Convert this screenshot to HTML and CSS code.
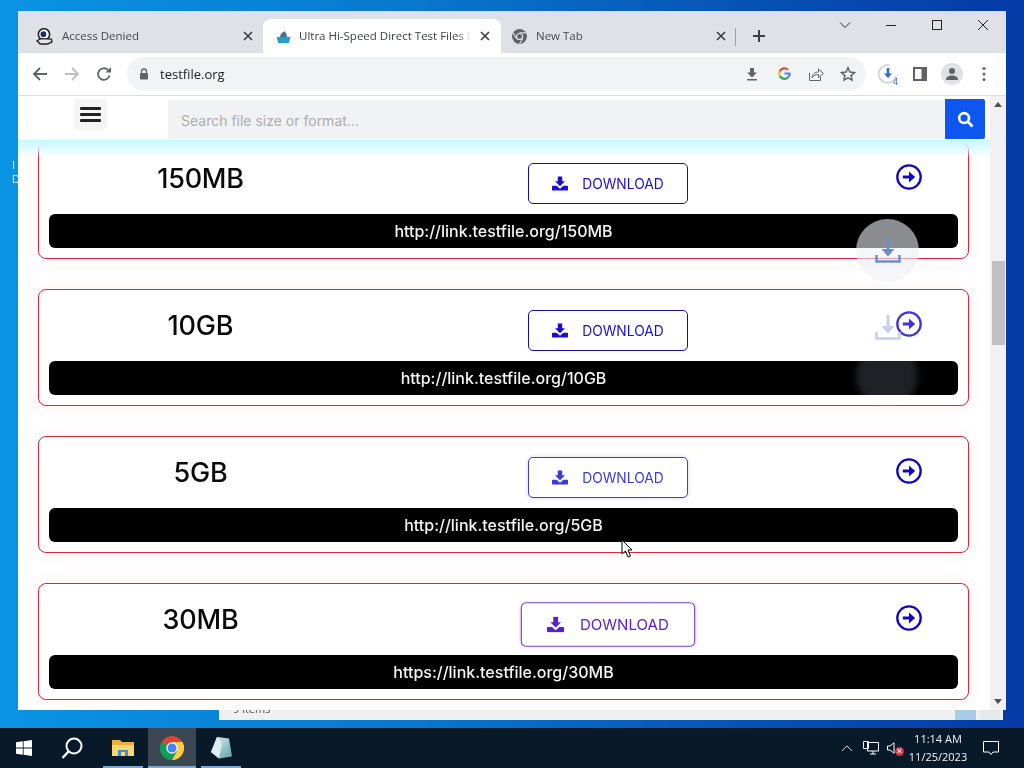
FILE: index.html
```html
<!DOCTYPE html>
<html lang="en">
<head>
<meta charset="utf-8">
<title>Ultra Hi-Speed Direct Test Files</title>
<link rel="stylesheet" href="styles.css">
</head>
<body>
<svg class="defs" width="0" height="0" aria-hidden="true">
  <symbol id="dl" viewBox="0 0 18 16"><path d="M6.500 0h5v5.600h3.100L9 11 3.400 5.600h3.100z"/><path d="M1 10.500h4.200L9 14l3.800-3.500H17c.6 0 1 .4 1 1V15c0 .6-.4 1-1 1H1c-.6 0-1-.4-1-1v-3.500c0-.6.4-1 1-1z"/></symbol>
  <symbol id="arrow" viewBox="0 0 26 26"><circle cx="13" cy="13" r="11.700" fill="none" stroke="currentColor" stroke-width="2.300"/><path d="M6.800 11.400h6.200V7.500l6.200 5.500-6.200 5.500v-3.900h-6.200z" fill="currentColor"/></symbol>
  <symbol id="fab" viewBox="0 0 26 25"><path d="M13 0v17" fill="none" stroke="currentColor" stroke-width="3"/><path d="M6.500 11h13L13 18.500z" fill="currentColor"/><path d="M1.500 17v6.500h23V17" fill="none" stroke="currentColor" stroke-width="2.500"/></symbol>
  <symbol id="close" viewBox="0 0 10 10"><path d="M1 1l8 8M9 1 1 9" fill="none" stroke="#3c4043" stroke-width="1.700"/></symbol>
</svg>
<div class="desktop">
  <div class="icon-label">I<br>D</div>
  <div class="back-window"><span>9 items</span><i class="view-a"></i><i class="view-b"></i></div>
  <div class="window">
    <div class="tabstrip">
      <div class="tab">
        <svg class="favicon" viewBox="0 0 16 16"><circle cx="7.500" cy="6" r="5.300" fill="#fff" stroke="#222" stroke-width="1.500"/><circle cx="7" cy="5.800" r="2.700" fill="#1d2a6b"/><path d="M1 12l3.500-2 10 .5.500 2.500-4 2H4z" fill="#e8e8e8" stroke="#222" stroke-width="1.300"/></svg>
        <span class="tab-title">Access Denied</span><svg class="tab-x"><use href="#close"/></svg>
      </div>
      <div class="tab active">
        <svg class="favicon" viewBox="0 0 16 16"><path d="M1.500 8.500h13l-1.500 5.500H3z" fill="#1f9fd0"/><path d="M4.500 8.500 6 5l3-2 1.500 2 1 3.500z" fill="#4a6f90"/></svg>
        <span class="tab-title fade">Ultra Hi-Speed Direct Test Files D</span><svg class="tab-x"><use href="#close"/></svg>
      </div>
      <div class="tab">
        <svg class="favicon" viewBox="0 0 16 16"><circle cx="8" cy="8" r="7" fill="#5f6368"/><circle cx="8" cy="8" r="3.400" fill="#dee1e6"/><circle cx="8" cy="8" r="2.300" fill="#5f6368"/><path d="M8 4.600h6M5 9.800 2 4.500M11 9.800 8 15" stroke="#dee1e6" stroke-width="1"/></svg>
        <span class="tab-title">New Tab</span><svg class="tab-x"><use href="#close"/></svg>
      </div>
      <i class="tab-divider"></i>
      <svg class="newtab" viewBox="0 0 14 14"><path d="M7 1v12M1 7h12" stroke="#3c4043" stroke-width="2"/></svg>
      <div class="winctl">
        <svg class="ctl-chev" viewBox="0 0 12 8"><path d="M1 1.500l5 5 5-5" fill="none" stroke="#333" stroke-width="1"/></svg>
        <svg class="ctl" viewBox="0 0 46 12"><path d="M18 6.500h10" stroke="#222" stroke-width="1"/></svg>
        <svg class="ctl" viewBox="0 0 46 12"><rect x="18.500" y="1.500" width="9" height="9" fill="none" stroke="#222" stroke-width="1"/></svg>
        <svg class="ctl" viewBox="0 0 46 12"><path d="M18 1l10 10M28 1 18 11" stroke="#222" stroke-width="1"/></svg>
      </div>
    </div>
    <div class="toolbar">
      <span class="tbtn"><svg viewBox="0 0 16 16" class="ico16"><path d="M15 8H2.500M8 2 2 8l6 6" fill="none" stroke="#5f6368" stroke-width="1.800"/></svg></span>
      <span class="tbtn"><svg viewBox="0 0 16 16" class="ico16"><path d="M1 8h12.500M8 2l6 6-6 6" fill="none" stroke="#bcbec2" stroke-width="1.800"/></svg></span>
      <span class="tbtn"><svg viewBox="0 0 16 16" class="ico16"><path d="M13.500 9.500A5.800 5.800 0 1 1 12 4" fill="none" stroke="#5f6368" stroke-width="1.800"/><path d="M9.500 6.500h5.500V1z" fill="#5f6368"/></svg></span>
      <div class="omnibox">
        <svg class="lock" viewBox="0 0 10 12"><path d="M2.500 5V3.500a2.500 2.500 0 0 1 5 0V5" fill="none" stroke="#5f6368" stroke-width="1.300"/><rect x="1" y="5" width="8" height="6.500" rx="1" fill="#5f6368"/></svg>
        <span class="url">testfile.org</span>
        <span class="obtn"><svg viewBox="0 0 14 14" class="ico14"><path d="M5 1h4v4.500h3L7 10.500 2 5.500h3zM2 12h10v1.500H2z" fill="#5f6368"/></svg></span>
        <span class="obtn"><svg viewBox="0 0 16 16" class="ico-g"><path d="M14 8H8M13.600 7.800A5.600 5.600 0 0 1 11.500 12.400" fill="none" stroke="#4285f4" stroke-width="2.300"/><path d="M11.500 12.400A5.600 5.600 0 0 1 2.900 10.400" fill="none" stroke="#34a853" stroke-width="2.300"/><path d="M2.900 10.400A5.600 5.600 0 0 1 2.900 5.600" fill="none" stroke="#fbbc05" stroke-width="2.300"/><path d="M2.900 5.600A5.600 5.600 0 0 1 11.900 4" fill="none" stroke="#ea4335" stroke-width="2.300"/></svg></span>
        <span class="obtn"><svg viewBox="0 0 16 16" class="ico16"><path d="M1.500 7v7.500h11V11" fill="none" stroke="#5f6368" stroke-width="1"/><path d="M4 12c.5-4 3-6 6.500-6V3l5 4.500-5 4V8.500C8 8.500 5.500 9.500 4 12z" fill="none" stroke="#5f6368" stroke-width="1"/></svg></span>
        <span class="obtn"><svg viewBox="0 0 16 16" class="ico16"><path d="M8 1.800l1.900 4.200 4.600.5-3.400 3.100.9 4.500-4-2.300-4 2.300.9-4.500-3.400-3.100 4.600-.5z" fill="none" stroke="#5f6368" stroke-width="1.500"/></svg></span>
      </div>
      <span class="tbtn ext"><svg viewBox="0 0 20 20" class="ico20"><path d="M12 1.500A8.800 8.800 0 1 0 18 12" fill="none" stroke="#cfd4da" stroke-width="1.800"/><path d="M8.700 4h2.600v5.500h2.700L10 14 6 9.500h2.700z" fill="#2f6fb8"/></svg><b class="ext-num">4</b></span>
      <span class="tbtn"><svg viewBox="0 0 14 14" class="ico14"><path d="M0 0h14v14H0z" fill="#5f6368"/><path d="M2 2h6.500v10H2z" fill="#fff"/></svg></span>
      <span class="tbtn"><span class="avatar"><svg viewBox="0 0 14 14" class="ico14"><circle cx="7" cy="4" r="3" fill="#5f6368"/><path d="M1 13c0-3 2.500-4.500 6-4.500s6 1.500 6 4.500z" fill="#5f6368"/></svg></span></span>
      <span class="tbtn"><svg viewBox="0 0 4 16" class="ico-menu"><circle cx="2" cy="2.500" r="1.500" fill="#5f6368"/><circle cx="2" cy="8" r="1.500" fill="#5f6368"/><circle cx="2" cy="13.500" r="1.500" fill="#5f6368"/></svg></span>
    </div>
    <div class="viewport">
      <div class="page">
        <header class="site-header">
          <div class="burger"><i></i><i></i><i></i></div>
          <div class="search">
            <div class="search-input">Search file size or format...</div>
            <div class="search-btn"><svg viewBox="0 0 18 18" class="ico-search"><circle cx="7.500" cy="7.500" r="5.200" fill="none" stroke="#fff" stroke-width="2.800"/><path d="M11.500 11.500l5 5" stroke="#fff" stroke-width="3"/></svg></div>
          </div>
        </header>
        <main class="cards">
          <section class="card">
            <div class="row"><div class="size">150MB</div><div class="btn-cell"><a class="dl-btn"><svg class="dl-ico"><use href="#dl"/></svg>DOWNLOAD</a></div><svg class="go"><use href="#arrow"/></svg></div>
            <div class="link">http://link.testfile.org/150MB</div>
          </section>
          <section class="card">
            <div class="row"><div class="size">10GB</div><div class="btn-cell"><a class="dl-btn"><svg class="dl-ico"><use href="#dl"/></svg>DOWNLOAD</a></div><svg class="go tint"><use href="#arrow"/></svg></div>
            <div class="link">http://link.testfile.org/10GB</div>
          </section>
          <section class="card">
            <div class="row"><div class="size">5GB</div><div class="btn-cell"><a class="dl-btn soft"><svg class="dl-ico"><use href="#dl"/></svg>DOWNLOAD</a></div><svg class="go"><use href="#arrow"/></svg></div>
            <div class="link">http://link.testfile.org/5GB</div>
          </section>
          <section class="card">
            <div class="row"><div class="size">30MB</div><div class="btn-cell"><a class="dl-btn hover"><svg class="dl-ico"><use href="#dl"/></svg>DOWNLOAD</a></div><svg class="go"><use href="#arrow"/></svg></div>
            <div class="link">https://link.testfile.org/30MB</div>
          </section>
        </main>
      </div>
      <div class="fab fab-main"><svg class="fab-ico"><use href="#fab"/></svg></div>
      <svg class="fab-ghost"><use href="#fab"/></svg>
      <div class="fab-dark"></div>
      <div class="scrollbar">
        <svg class="sb-arrow" viewBox="0 0 8 5"><path d="M0 5l4-5 4 5z" fill="#505050"/></svg>
        <div class="sb-track"><div class="sb-thumb"></div></div>
        <svg class="sb-arrow" viewBox="0 0 8 5"><path d="M0 0l4 5 4-5z" fill="#505050"/></svg>
      </div>
    </div>
  </div>
  <svg class="cursor" viewBox="0 0 12 19"><path d="M1 1v14l3.500-3 2.500 6 2.500-1-2.500-6H11z" fill="#fff" stroke="#000" stroke-width="1"/></svg>
  <footer class="taskbar">
    <div class="task start"><svg viewBox="0 0 16 16" class="ico16"><path d="M0 2.300 6.800 1.300v6.300H0zM7.600 1.200 16 0v7.600H7.600zM0 8.400h6.800v6.300L0 13.700zM7.600 8.400H16V16l-8.400-1.200z" fill="#fff"/></svg></div>
    <div class="task search-t"><svg viewBox="0 0 22 22" class="ico22"><circle cx="13" cy="9" r="7.500" fill="none" stroke="#fff" stroke-width="2"/><path d="M7.500 14.500 1.500 21" stroke="#fff" stroke-width="2.400"/></svg></div>
    <div class="task app"><svg viewBox="0 0 22 18" class="ico-folder"><path d="M0 1h8l2 2h12v14H0z" fill="#e8b13d"/><path d="M0 6h22v11H0z" fill="#f7d774"/><path d="M6 11h10v6H6z" fill="#3f8ed0"/><path d="M9 13h4v4H9z" fill="#f7d774"/></svg></div>
    <div class="task app on"><svg viewBox="0 0 24 24" class="ico-chrome"><circle cx="12" cy="12" r="12" fill="#db4437"/><path d="M12 12 1.600 6A12 12 0 0 0 12 24l6-10.400z" fill="#0f9d58"/><path d="M12 6h10.400A12 12 0 0 1 12 24l5.200-9z" fill="#ffcd40"/><circle cx="12" cy="12" r="5.700" fill="#fff"/><circle cx="12" cy="12" r="4.500" fill="#4285f4"/></svg></div>
    <div class="task app"><svg viewBox="0 0 22 24" class="ico-note"><defs><linearGradient id="nt" x1="0" y1="0" x2="1" y2="1"><stop offset="0" stop-color="#e6f6f6"/><stop offset="1" stop-color="#5f9ea2"/></linearGradient></defs><path d="M7 1 19 2.500l3 18-13 2L1 16z" fill="url(#nt)"/><path d="M7 1 1 16l8 6.500L12 7z" fill="#d6eff0"/></svg></div>
    <div class="tray">
      <svg viewBox="0 0 14 8" class="tray-up"><path d="M1 7l6-6 6 6" fill="none" stroke="#fff" stroke-width="1"/></svg>
      <svg viewBox="0 0 16 14" class="tray-net"><path d="M4.500 1.500H15.500V10H4.500zM.5.500h5v7h-5zM7 13h6M10 10v3" fill="#08192a" stroke="#fff" stroke-width="1"/></svg>
      <span class="tray-vol"><svg viewBox="0 0 10 12" class="vol-ico"><path d="M.5 4h2.500L7 .8v10.400L3 8H.5z" fill="none" stroke="#fff" stroke-width="1"/></svg><b class="vol-x">×</b></span>
      <div class="clock"><span>11:14 AM</span><span>11/25/2023</span></div>
      <svg viewBox="0 0 16 16" class="tray-note"><path d="M.5 1.500h15v10.500H10L8 14.500 6 12H.5z" fill="none" stroke="#fff" stroke-width="1"/></svg>
    </div>
  </footer>
</div>
</body>
</html>
```
FILE: styles.css
```css
* { box-sizing: border-box; }
html, body { margin: 0; height: 100%; overflow: hidden; }
body { font-family: "Open Sans", "Liberation Sans", sans-serif; }
svg { display: block; }
.defs { position: absolute; }

.desktop {
  position: relative; width: 1024px; height: 768px; overflow: hidden;
  display: flex; flex-direction: column; justify-content: flex-end;
  background: linear-gradient(90deg, #0a94e4 0%, #0878cf 40%, #0650b4 75%, #053aa6 100%);
}
.icon-label { position: absolute; left: 12px; top: 158px; width: 6px; overflow: hidden; color: #e8f2fa; font: 11px/14px "Liberation Sans", sans-serif; }
.back-window {
  position: absolute; left: 219px; top: 698px; width: 784px; height: 22px;
  background: #f0f0f0; color: #555; font: 11px/18px "Open Sans", sans-serif;
  padding: 2px 0 0 14px;
}
.back-window span { display: block; }
.view-a { position: absolute; right: 27px; top: 12px; width: 21px; height: 10px; background: #a9cbe6; }
.view-b { position: absolute; right: 3px; top: 12px; width: 20px; height: 10px; background: #e6e8ea; }

.window {
  position: absolute; left: 18px; top: 11px; width: 988px; height: 699px;
  display: flex; flex-direction: column; background: #fff;
}
.tabstrip { height: 42px; background: #dee1e6; display: flex; align-items: flex-end; flex: none; position: relative; }
.tab { height: 34px; display: flex; align-items: center; color: #45494e; font-size: 11.5px; position: relative; }
.tab:nth-child(1) { width: 245px; padding-left: 18px; }
.tab:nth-child(2) { width: 238px; padding-left: 12px; }
.tab:nth-child(3) { width: 235px; padding-left: 9px; }
.tab.active { background: #fff; border-radius: 8px 8px 0 0; color: #3c4043; }
.favicon { width: 17px; height: 17px; flex: none; margin-right: 9px; }
.active .favicon { margin-right: 7px; }
.tab:nth-child(3) .favicon { margin-left: 1px; margin-right: 8px; }
.tab-title { flex: 1; min-width: 0; white-space: nowrap; overflow: hidden; margin-top: -1px; padding-bottom: 1px; }
.tab-title.fade { -webkit-mask-image: linear-gradient(90deg, #000 92%, transparent 100%); mask-image: linear-gradient(90deg, #000 92%, transparent 100%); }
.tab-x { width: 10px; height: 10px; flex: none; margin: 0 10px; }
.active .tab-x { margin-right: 11px; margin-left: 9px; }
.tab-divider { width: 1px; height: 18px; background: #9aa0a6; align-self: flex-end; margin-bottom: 7px; margin-left: -1px; }
.newtab { width: 14px; height: 14px; margin: 0 0 10px 16px; }
.winctl { position: absolute; right: 0; top: 0; height: 28px; display: flex; align-items: center; }
.ctl-chev { width: 12px; height: 8px; margin-right: 17px; }
.ctl { width: 46px; height: 12px; }

.toolbar { height: 43px; flex: none; display: flex; align-items: center; padding: 0 6px 1px; background: #fff; border-bottom: 1px solid #dadce0; }
.tbtn { width: 32px; height: 32px; flex: none; display: flex; align-items: center; justify-content: center; position: relative; }
.ico14 { width: 14px; height: 14px; }
.ico16 { width: 16px; height: 16px; }
.ico20 { width: 20px; height: 20px; }
.ico22 { width: 22px; height: 22px; }
.ico-g { width: 15px; height: 15px; }
.ico-search { width: 17px; height: 17px; }
.ico-menu { width: 4px; height: 16px; }
.omnibox { flex: 1; height: 34px; margin: 0 6px 0 7px; border-radius: 17px; background: #f1f3f4; display: flex; align-items: center; padding: 0 2px 0 12px; }
.lock { width: 10px; height: 12px; flex: none; margin-right: 11px; }
.url { flex: 1; font-size: 13px; color: #202124; }
.obtn { width: 32px; height: 32px; display: flex; align-items: center; justify-content: center; flex: none; }
.ext-num { position: absolute; left: 21px; top: 18px; font-size: 9px; font-weight: 400; color: #2f6fb8; line-height: 11px; }
.avatar { width: 22px; height: 22px; border-radius: 50%; background: #dfe1e5; display: flex; align-items: center; justify-content: center; }

.viewport { flex: 1; position: relative; overflow: hidden; display: flex; min-height: 0; }
.page { flex: 1; min-width: 0; position: relative; font-family: Inter, "Liberation Sans", sans-serif; }
.site-header { height: 47px; background: #fff; position: relative; z-index: 2; padding: 3px 5px 0 56px; display: flex; align-items: flex-start; }
.site-header::after { content: ""; position: absolute; left: 0; right: 0; top: 44px; height: 18px; background: linear-gradient(#c6f8ff 0%, rgba(214,250,255,.8) 45%, rgba(255,255,255,0) 100%); pointer-events: none; }
.burger { width: 33px; height: 31px; background: #f5f5f5; border-radius: 3px; display: flex; flex-direction: column; justify-content: center; gap: 3px; padding: 0 6px; flex: none; }
.burger i { display: block; height: 3px; border-radius: 1px; background: #222; }
.search { flex: 1; margin-left: 61px; display: flex; height: 40px; position: relative; z-index: 3; }
.search-input { flex: 1; margin-top: 1px; background: #f1f2f3; height: 39px; border-radius: 3px 0 0 3px; padding: 1px 0 0 13px; color: #adadad; font-size: 14px; line-height: 39px; }
.search-btn { width: 40px; background: #0d56f0; border-radius: 0 2px 2px 0; display: flex; align-items: center; justify-content: center; }

.cards { padding: 0 0 0 20px; margin-top: -1px; display: flex; flex-direction: column; gap: 30px; }
.card { width: 931px; height: 117px; border: 1px solid #d8263a; border-radius: 8px; padding: 20px 10px 10px; background: #fff; box-shadow: 0 0 14px rgba(255, 80, 60, .10); flex: none; }
.row { display: grid; grid-template-columns: 303px 512px 90px; height: 41px; margin-bottom: 10px; padding-right: 4px; color: #0b00c4; }
.size { color: #0a0a0a; text-align: center; font-size: 27px; line-height: 32px; font-weight: 500; letter-spacing: -.2px; }
.btn-cell { display: flex; justify-content: center; }
.dl-btn { width: 160px; height: 41px; border: 1px solid #150ea0; border-radius: 5px; display: flex; align-items: center; justify-content: center; gap: 14px; color: #1a0fd0; font-size: 13.8px; background: #fff; }
.dl-btn.soft { color: #3a3ad8; border-color: #4040c0; box-shadow: 0 0 4px rgba(70, 70, 220, .25); }
.dl-btn.hover { transform: scale(1.09); color: #5a20d0; border-color: #7a45cc; box-shadow: 0 0 3px rgba(120, 60, 220, .2); }
.dl-ico { width: 16px; height: 15px; fill: currentColor; flex: none; }
.go { width: 26px; height: 26px; margin: 1px 0 0 32px; color: #1207c0; }
.go.tint { color: #3f33e0; }
.link { height: 34px; border-radius: 6px; background: #000; color: #f4f4f4; text-align: center; font-size: 16px; line-height: 35px; font-weight: 500; }

.fab { position: absolute; border-radius: 50%; z-index: 1; }
.fab-main { left: 838px; top: 123px; width: 63px; height: 63px; background: rgba(237, 240, 245, .59); display: flex; align-items: center; justify-content: center; }
.fab-ico { width: 26px; height: 25px; color: #6a8fc8; }
.fab-ghost { position: absolute; left: 857px; top: 219px; width: 26px; height: 25px; color: #c6cfe6; z-index: 1; }
.fab-dark { position: absolute; left: 838px; top: 249px; width: 62px; height: 62px; border-radius: 50%; background: #1f2126; mix-blend-mode: screen; filter: blur(3px); z-index: 1; }

.scrollbar { width: 16px; flex: none; background: #f1f1f1; display: flex; flex-direction: column; align-items: center; padding: 6px 0; position: relative; z-index: 3; }
.sb-arrow { width: 8px; height: 5px; flex: none; }
.sb-track { flex: 1; width: 100%; padding-top: 154px; }
.sb-thumb { width: 13px; height: 84px; margin: 0 auto; background: #c1c1c1; }

.cursor { position: absolute; left: 621px; top: 539px; width: 12px; height: 19px; z-index: 9; }

.taskbar { height: 40px; flex: none; background: #08192a; display: flex; align-items: center; position: relative; z-index: 4; }
.task { height: 40px; display: flex; align-items: center; justify-content: center; flex: none; position: relative; }
.start { width: 48px; }
.search-t { width: 48px; }
.app { width: 48px; margin-left: 2px; }
.search-t + .app { margin-left: 7px; width: 40px; }
.app::after { content: ""; position: absolute; left: 0; right: 0; bottom: 0; height: 2px; background: #7fa8d0; }
.app.on { background: #3a4652; width: 48px; margin-left: 5px; }
.app.on + .app { width: 40px; margin-left: 5px; }
.ico-folder { width: 22px; height: 18px; }
.ico-chrome { width: 24px; height: 24px; }
.ico-note { width: 22px; height: 24px; }
.tray { margin-left: auto; display: flex; align-items: center; color: #fff; height: 40px; padding-right: 25px; }
.tray-up { width: 12px; height: 7px; margin-right: 10px; }
.tray-net { width: 16px; height: 14px; margin-right: 8px; }
.tray-vol { position: relative; width: 10px; height: 12px; margin-right: 5px; }
.vol-ico { width: 10px; height: 12px; }
.vol-x { position: absolute; left: 8px; top: 5px; width: 9px; height: 9px; border-radius: 50%; background: #d8323a; font: 700 9px/9px "Liberation Sans", sans-serif; text-align: center; color: #fff; }
.clock { width: 72px; display: flex; flex-direction: column; align-items: center; font-size: 11px; line-height: 18px; color: #f2f6fa; }
.tray-note { width: 16px; height: 16px; margin-left: 9px; }
```
